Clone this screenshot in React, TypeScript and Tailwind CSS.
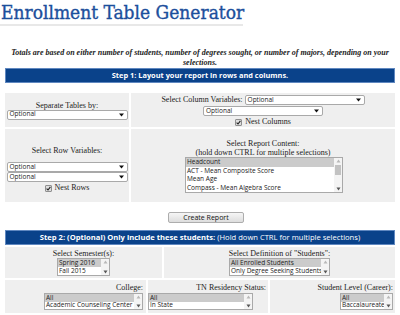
import React from "react";

const SANS = "font-['Open_Sans','Noto_Sans',sans-serif]";

function Arrow({ className = "" }: { className?: string }) {
  return (
    <svg width="5" height="4" viewBox="0 0 5 4" className={className}>
      <path d="M0 0.5 L5 0.5 L2.5 3.5 Z" fill="#111" />
    </svg>
  );
}

function Dropdown({ w }: { w: string }) {
  return (
    <div
      className={`flex items-center justify-between h-[10px] border border-[#a9a9a9] rounded-[2px] bg-white pl-[2px] pr-[3px] text-[6.5px] leading-none text-[#222] ${SANS} ${w}`}
    >
      <span>Optional</span>
      <Arrow />
    </div>
  );
}

function ScrollArrow({ up, dark }: { up?: boolean; dark?: boolean }) {
  return (
    <svg width="5" height="4" viewBox="0 0 5 4">
      {up ? (
        <path d="M0.5 3.5 L4.5 3.5 L2.5 0.5 Z" fill={dark ? "#555" : "#b8b8b8"} />
      ) : (
        <path d="M0.5 0.5 L4.5 0.5 L2.5 3.5 Z" fill={dark ? "#555" : "#b8b8b8"} />
      )}
    </svg>
  );
}

function ListBox({
  items,
  w,
  rowH,
  thumb,
}: {
  items: string[];
  w: string;
  rowH: string;
  thumb?: boolean;
}) {
  return (
    <div className={`flex border border-[#a9a9a9] bg-white ${w} ${SANS}`}>
      <div className="flex-1 min-w-0">
        {items.map((t, i) => (
          <div
            key={t}
            className={`${rowH} flex items-center px-[1px] text-[6.5px] leading-none whitespace-nowrap overflow-hidden text-[#222] ${
              i === 0 ? "bg-[#cbcbcb]" : ""
            }`}
          >
            {t}
          </div>
        ))}
      </div>
      <div className="w-[8px] flex flex-col items-center bg-[#f4f4f4] py-[1px]">
        <ScrollArrow up />
        {thumb ? <div className="mt-[2px] w-[6px] h-[10px] bg-[#c2c2c2]" /> : null}
        <div className="flex-1" />
        <ScrollArrow dark />
      </div>
    </div>
  );
}

function Check({ label }: { label: string }) {
  return (
    <div className="flex items-center justify-center gap-[3px] h-[8px] text-[8px] leading-none">
      <div className="w-[7px] h-[7px] border border-[#8f8f8f] bg-[#dedede] rounded-[1px] flex items-center justify-center">
        <svg width="5" height="5" viewBox="0 0 5 5">
          <path d="M0.6 2.6 L2 4 L4.4 0.8" stroke="#222" strokeWidth="1.1" fill="none" />
        </svg>
      </div>
      <span>{label}</span>
    </div>
  );
}

export default function App() {
  return (
    <div className="w-[400px] h-[315px] overflow-hidden bg-white font-['Liberation_Serif',serif] text-[#222]">
      <div className="w-[243px] h-[26px] border-b-2 border-[#e8e8e8] pl-[1px]">
        <h1 className="text-[#1c4f9c] text-[19px] leading-[24px] font-['DejaVu_Serif',serif] font-stretch-condensed whitespace-nowrap [-webkit-text-stroke:0.35px_#1c4f9c]">
          Enrollment Table Generator
        </h1>
      </div>

      <p className="mt-[22px] text-center text-[8px] leading-[10px] font-bold italic whitespace-nowrap">
        Totals are based on either number of students, number of degrees sought, or number of majors, depending on your
        <br />
        selections.
      </p>

      <div className="mx-[5px]">
        <div
          className={`h-[15px] bg-[#0a428a] border border-[#6088c0] flex items-center justify-center text-white text-[7.4px] font-bold ${SANS}`}
        >
          Step 1: Layout your report in rows and columns.
        </div>

        <div className="mt-[10px] flex gap-[2px] h-[34px]">
          <div className="w-[124px] bg-[#efefef] flex flex-col justify-center items-center px-[2px]">
            <div className="text-[8px] leading-[9px] text-center">Separate Tables by:</div>
            <Dropdown w="w-[121px]" />
          </div>
          <div className="flex-1 bg-[#efefef] flex flex-col items-center pt-[2px]">
            <div className="flex items-center gap-[2px] h-[10px]">
              <span className="text-[8px] leading-none">Select Column Variables:</span>
              <Dropdown w="w-[120px]" />
            </div>
            <div className="mt-[1px]">
              <Dropdown w="w-[120px]" />
            </div>
            <div className="mt-[2px]">
              <Check label="Nest Columns" />
            </div>
          </div>
        </div>

        <div className="mt-[2px] flex gap-[2px] h-[73px]">
          <div className="w-[124px] bg-[#efefef] flex flex-col items-center pt-[17px] px-[2px]">
            <div className="text-[8px] leading-[9px]">Select Row Variables:</div>
            <div className="mt-[7px] flex flex-col">
              <Dropdown w="w-[121px]" />
              <Dropdown w="w-[121px]" />
            </div>
            <div className="mt-[2px]">
              <Check label="Nest Rows" />
            </div>
          </div>
          <div className="flex-1 bg-[#efefef] flex flex-col items-center pt-[10px]">
            <div className="text-[8px] leading-[9px] text-center">
              Select Report Content:
              <br />
              (hold down CTRL for multiple selections)
            </div>
            <div className="ml-[2px]">
              <ListBox
                w="w-[158px]"
                rowH="h-[8.5px]"
                thumb
                items={[
                  "Headcount",
                  "ACT - Mean Composite Score",
                  "Mean Age",
                  "Compass - Mean Algebra Score",
                ]}
              />
            </div>
          </div>
        </div>

        <div className="mt-[10px] flex justify-center">
          <div
            className={`ml-[12px] w-[76px] h-[11px] border border-[#adadad] rounded-[2px] bg-gradient-to-b from-[#f6f6f6] to-[#dddddd] flex items-center justify-center text-[7px] leading-none text-[#111] ${SANS}`}
          >
            Create Report
          </div>
        </div>

        <div
          className={`mt-[7px] h-[15px] bg-[#0a428a] border border-[#6088c0] flex items-center justify-center text-white text-[7.6px] whitespace-nowrap ${SANS}`}
        >
          <span className="font-bold">Step 2: (Optional) Only include these students:</span>
          <span>&nbsp;(Hold down CTRL for multiple selections)</span>
        </div>

        <div className="mt-[2px] flex gap-[2px] h-[31px]">
          <div className="w-[157px] bg-[#efefef] flex flex-col items-center pt-[2px]">
            <div className="text-[8px] leading-[9px]">Select Semester(s):</div>
            <ListBox w="w-[53px]" rowH="h-[8px]" items={["Spring 2016", "Fall 2015"]} />
          </div>
          <div className="flex-1 bg-[#efefef] flex flex-col items-center pt-[2px]">
            <div className="text-[8px] leading-[9px]">Select Definition of "Students":</div>
            <ListBox
              w="w-[101px]"
              rowH="h-[8px]"
              items={["All Enrolled Students", "Only Degree Seeking Students"]}
            />
          </div>
        </div>

        <div className="mt-[2px] flex gap-[2px] h-[33px]">
          <div className="w-[141px] bg-[#efefef] flex flex-col items-end pt-[3px] pr-[3px]">
            <div className="text-[8px] leading-[9px]">College:</div>
            <div className="mt-[1px]">
              <ListBox w="w-[99px]" rowH="h-[7.5px]" items={["All", "Academic Counseling Center"]} />
            </div>
          </div>
          <div className="w-[120px] bg-[#efefef] flex flex-col pt-[3px] pr-[2px]">
            <div className="text-[8px] leading-[9px] text-right">TN Residency Status:</div>
            <div className="mt-[1px]">
              <ListBox w="w-[105px]" rowH="h-[7.5px]" items={["All", "In State"]} />
            </div>
          </div>
          <div className="flex-1 bg-[#efefef] flex flex-col items-end pt-[3px] pr-[2px]">
            <div className="text-[8px] leading-[9px]">Student Level (Career):</div>
            <div className="mt-[1px]">
              <ListBox w="w-[53px]" rowH="h-[7.5px]" items={["All", "Baccalaureate"]} />
            </div>
          </div>
        </div>
      </div>
    </div>
  );
}
